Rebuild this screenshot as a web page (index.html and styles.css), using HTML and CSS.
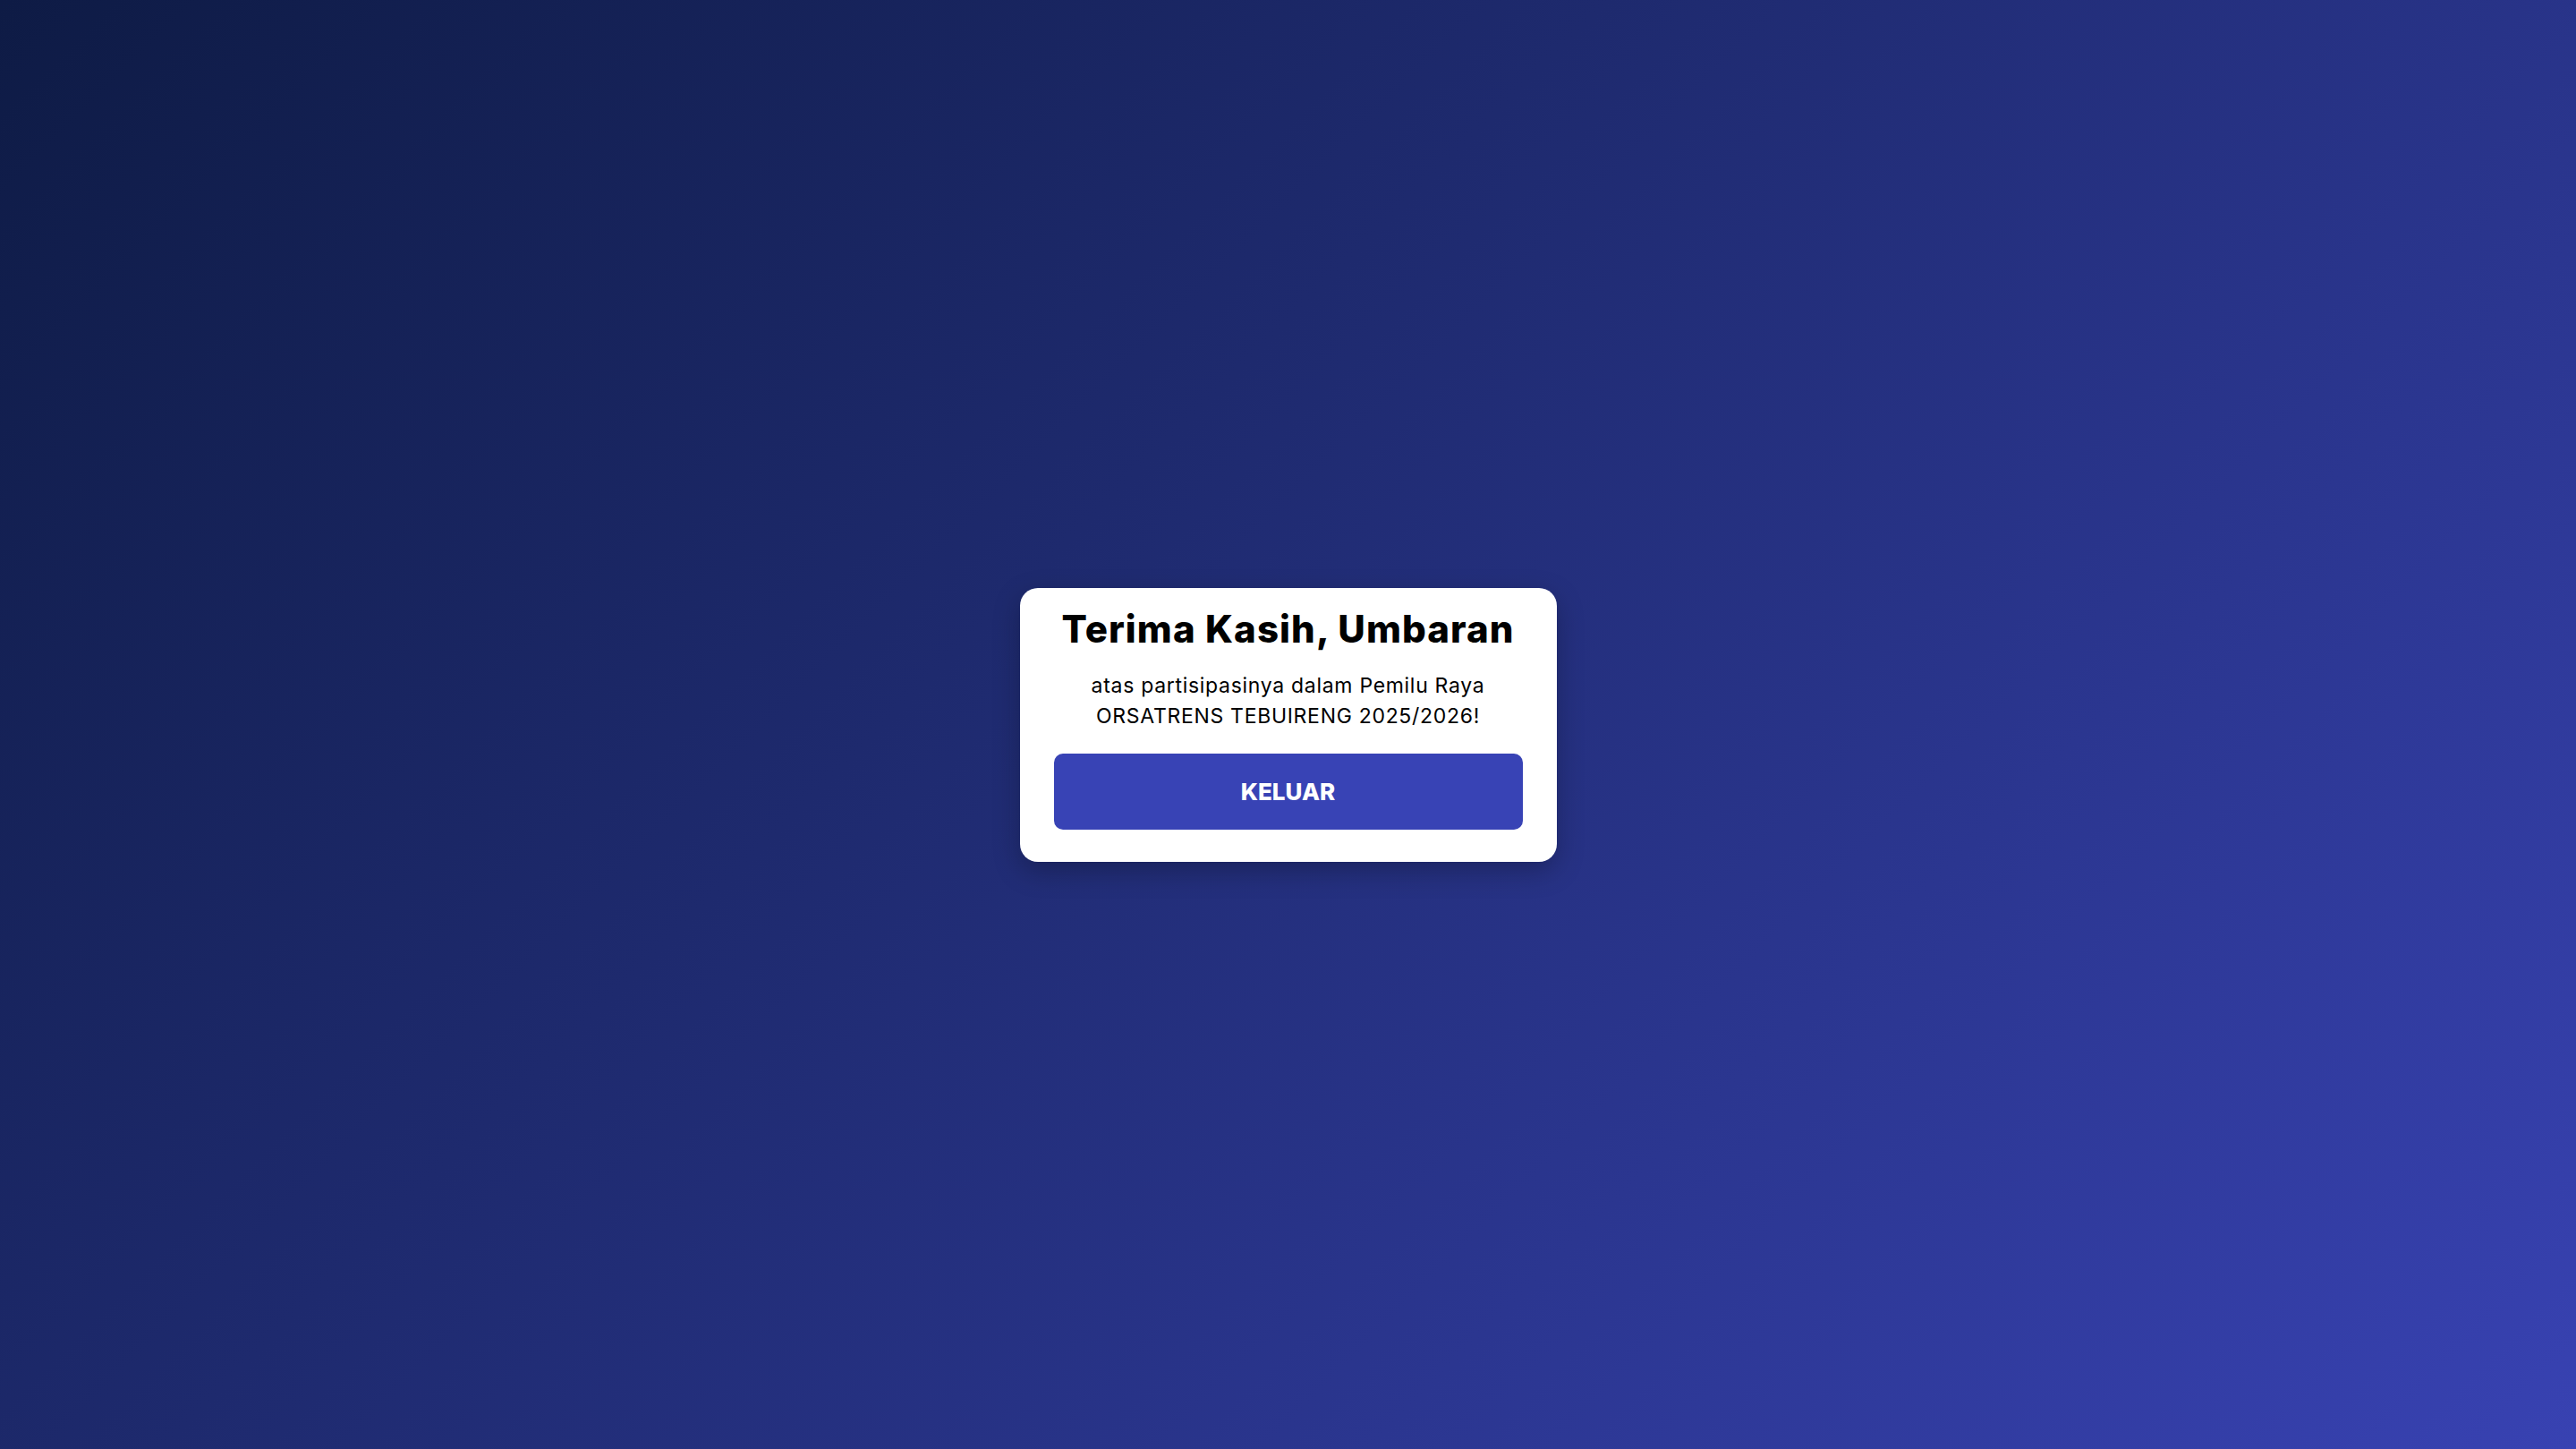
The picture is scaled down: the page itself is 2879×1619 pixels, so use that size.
FILE: index.html
```html
<!DOCTYPE html>
<html lang="id">
<head>
<meta charset="utf-8">
<title>Terima Kasih</title>
<link rel="stylesheet" href="styles.css">
</head>
<body>
  <main class="page">
    <section class="card">
      <h1 class="title">Terima Kasih, Umbaran</h1>
      <p class="message">atas partisipasinya dalam Pemilu Raya ORSATRENS TEBUIRENG 2025/2026!</p>
      <button class="btn-logout" type="button">KELUAR</button>
    </section>
  </main>
</body>
</html>
```

FILE: styles.css
```css
* { box-sizing: border-box; }
html, body { margin: 0; height: 100%; }
body {
  font-family: "Inter", "Noto Sans", "Liberation Sans", sans-serif;
  background: linear-gradient(135deg, #0e1b45 0%, #1e2a6e 40%, #3842b2 100%);
  min-height: 100vh;
}
.page {
  min-height: 100vh;
  display: flex;
  align-items: center;
  justify-content: center;
}
.card {
  width: 600px;
  background: #ffffff;
  border-radius: 20px;
  padding: 21px 38px 36px;
  display: flex;
  flex-direction: column;
  align-items: stretch;
  text-align: center;
  box-shadow: 0 10px 30px rgba(0, 0, 0, 0.25);
}
.title {
  margin: 0;
  font-size: 42px;
  line-height: 50px;
  font-weight: 800;
  color: #000;
  letter-spacing: 1.1px;
}
.message {
  margin: 21px 0 0;
  font-size: 23px;
  line-height: 34px;
  font-weight: 400;
  color: #000;
  letter-spacing: 0.7px;
}
.btn-logout {
  margin-top: 25px;
  height: 85px;
  border: 0;
  border-radius: 10px;
  background: #3843b5;
  color: #fff;
  font-family: inherit;
  font-size: 26px;
  font-weight: 800;
  letter-spacing: 0;
  cursor: pointer;
}
```
